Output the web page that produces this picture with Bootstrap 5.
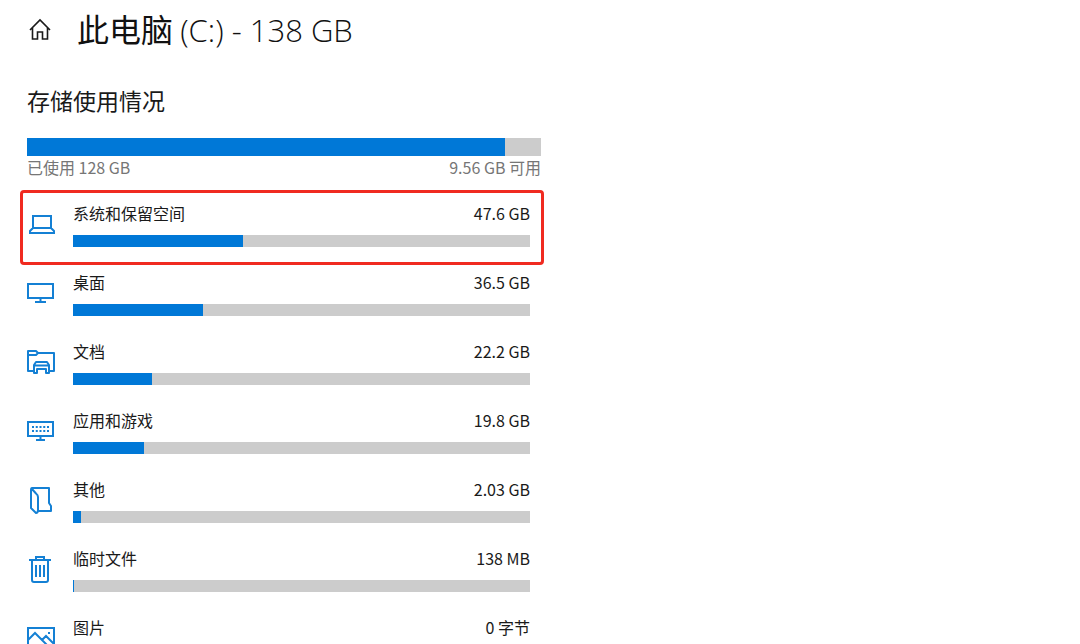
<!DOCTYPE html>
<html lang="zh-CN">
<head>
<meta charset="utf-8">
<meta name="viewport" content="width=device-width, initial-scale=1">
<title>此电脑 (C:) - 138 GB</title>
<link href="https://cdn.jsdelivr.net/npm/bootstrap@5.3.0/dist/css/bootstrap.min.css" rel="stylesheet">
<style>
  body { font-family: "Noto Sans CJK SC", sans-serif; font-size: 16px; line-height: 24px; color: #1a1a1a; background: #fff; }
  .settings-page { padding: 8px 27px 0; }
  .storage { max-width: 514px; }
  .page-head { gap: 24px; margin-bottom: 36px; }
  .home-link { color: #1a1a1a; width: 26px; }
  .page-title { font-size: 32px; line-height: 40px; font-weight: 400; color: #111; }
  .page-title .drive { font-family: "Open Sans", sans-serif; font-size: 31px; font-weight: 300; }
  .section-title { font-size: 23px; line-height: 28px; font-weight: 400; margin-bottom: 24px; }
  .progress { --bs-progress-bg: #ccc; --bs-progress-bar-bg: #0078d7; --bs-progress-border-radius: 0; --bs-progress-height: 12px; }
  .progress.total { --bs-progress-height: 18px; }
  .totals { color: #767676; line-height: 22px; margin-bottom: 15px; }
  .usage-row { padding: 8px 11px 15px 0; }
  .usage-icon { width: 46px; padding-top: 8px; color: #1480d4; }
  .usage-icon svg, .home-link svg { display: block; fill: none; stroke: currentColor; stroke-width: 2; }
  .home-link svg { stroke-width: 1.6; }
  .usage-label { margin-bottom: 10px; }
  .highlighted::after { content: ""; position: absolute; inset: -3px -3px -3px -7px; border: 3px solid #f02a20; border-radius: 4px; pointer-events: none; }
</style>
</head>
<body>
<main class="settings-page vh-100 overflow-hidden">
  <header class="page-head d-flex align-items-center">
    <a class="home-link" href="#" aria-label="主页"><svg width="26" height="26" viewBox="0 0 26 26"><path d="M3 14 13 4l10 10M5.500 12v11h5v-7h5v7h5V12"/></svg></a>
    <h1 class="page-title mb-0">此电脑 <span class="drive">(C:) - 138 GB</span></h1>
  </header>
  <section class="storage">
    <h2 class="section-title">存储使用情况</h2>
    <div class="progress total" role="progressbar" aria-label="存储使用情况" aria-valuenow="93" aria-valuemin="0" aria-valuemax="100"><div class="progress-bar" style="width:93%"></div></div>
    <div class="totals d-flex justify-content-between"><span>已使用 128 GB</span><span>9.56 GB 可用</span></div>
    <ul class="list-unstyled mb-0">
      <li class="usage-row highlighted position-relative d-flex">
        <div class="usage-icon"><svg width="30" height="30" viewBox="0 0 30 30"><path d="M6 7h18v12H6zM6 19l-3 3v2h24v-2l-3-3"/></svg></div>
        <div class="flex-grow-1">
          <div class="usage-label d-flex justify-content-between"><span>系统和保留空间</span><span>47.6 GB</span></div>
          <div class="progress" role="progressbar" aria-label="系统和保留空间" aria-valuenow="37" aria-valuemin="0" aria-valuemax="100"><div class="progress-bar" style="width:37.2%"></div></div>
        </div>
      </li>
      <li class="usage-row d-flex">
        <div class="usage-icon"><svg width="30" height="30" viewBox="0 0 30 30"><path d="M1 6h25v14H1zM13.500 20v4M8 24h11"/></svg></div>
        <div class="flex-grow-1">
          <div class="usage-label d-flex justify-content-between"><span>桌面</span><span>36.5 GB</span></div>
          <div class="progress" role="progressbar" aria-label="桌面" aria-valuenow="28" aria-valuemin="0" aria-valuemax="100"><div class="progress-bar" style="width:28.4%"></div></div>
        </div>
      </li>
      <li class="usage-row d-flex">
        <div class="usage-icon"><svg width="30" height="30" viewBox="0 0 30 30" stroke-linejoin="round"><path d="M6 24H1V4h8l2 2h16v18h-4M1 8h8l2-2M7 26v-8l2-3h11l2 3v8h-3v-4h-9v4zM8 18.500h13"/></svg></div>
        <div class="flex-grow-1">
          <div class="usage-label d-flex justify-content-between"><span>文档</span><span>22.2 GB</span></div>
          <div class="progress" role="progressbar" aria-label="文档" aria-valuenow="17" aria-valuemin="0" aria-valuemax="100"><div class="progress-bar" style="width:17.3%"></div></div>
        </div>
      </li>
      <li class="usage-row d-flex">
        <div class="usage-icon"><svg width="30" height="30" viewBox="0 0 30 30"><path d="M1 6h25v14H1zM13.500 20v4M9 24h9"/><path d="M5 11h17M5 15h17" stroke-dasharray="2 1.75"/></svg></div>
        <div class="flex-grow-1">
          <div class="usage-label d-flex justify-content-between"><span>应用和游戏</span><span>19.8 GB</span></div>
          <div class="progress" role="progressbar" aria-label="应用和游戏" aria-valuenow="15" aria-valuemin="0" aria-valuemax="100"><div class="progress-bar" style="width:15.5%"></div></div>
        </div>
      </li>
      <li class="usage-row d-flex">
        <div class="usage-icon"><svg width="30" height="30" viewBox="0 0 30 30" stroke-linejoin="round"><path d="M5 3h17v15l2 3v5H11M5 3q-1 0-1 2v18l5 5q2 0 2-3V12q0-2-2-3.500L5 4"/></svg></div>
        <div class="flex-grow-1">
          <div class="usage-label d-flex justify-content-between"><span>其他</span><span>2.03 GB</span></div>
          <div class="progress" role="progressbar" aria-label="其他" aria-valuenow="2" aria-valuemin="0" aria-valuemax="100"><div class="progress-bar" style="width:1.7%"></div></div>
        </div>
      </li>
      <li class="usage-row d-flex">
        <div class="usage-icon"><svg width="30" height="30" viewBox="0 0 30 30"><path d="M2 6h22M9 6V3h8v3M5 6v20q0 2 2 2h12q2 0 2-2V6M9 11v12M13 11v12M17 11v12"/></svg></div>
        <div class="flex-grow-1">
          <div class="usage-label d-flex justify-content-between"><span>临时文件</span><span>138 MB</span></div>
          <div class="progress" role="progressbar" aria-label="临时文件" aria-valuenow="0" aria-valuemin="0" aria-valuemax="100"><div class="progress-bar" style="width:0.3%"></div></div>
        </div>
      </li>
      <li class="usage-row d-flex">
        <div class="usage-icon"><svg width="30" height="30" viewBox="0 0 30 30"><path d="M1 5h26v20H1zM1 17l7-7 15 15M15 17l4-4 8 8"/><path d="M21 10h2"/></svg></div>
        <div class="flex-grow-1">
          <div class="usage-label d-flex justify-content-between"><span>图片</span><span>0 字节</span></div>
          <div class="progress" role="progressbar" aria-label="图片" aria-valuenow="0" aria-valuemin="0" aria-valuemax="100"><div class="progress-bar" style="width:0%"></div></div>
        </div>
      </li>
    </ul>
  </section>
</main>
<script src="https://cdn.jsdelivr.net/npm/bootstrap@5.3.0/dist/js/bootstrap.bundle.min.js"></script>
</body>
</html>
